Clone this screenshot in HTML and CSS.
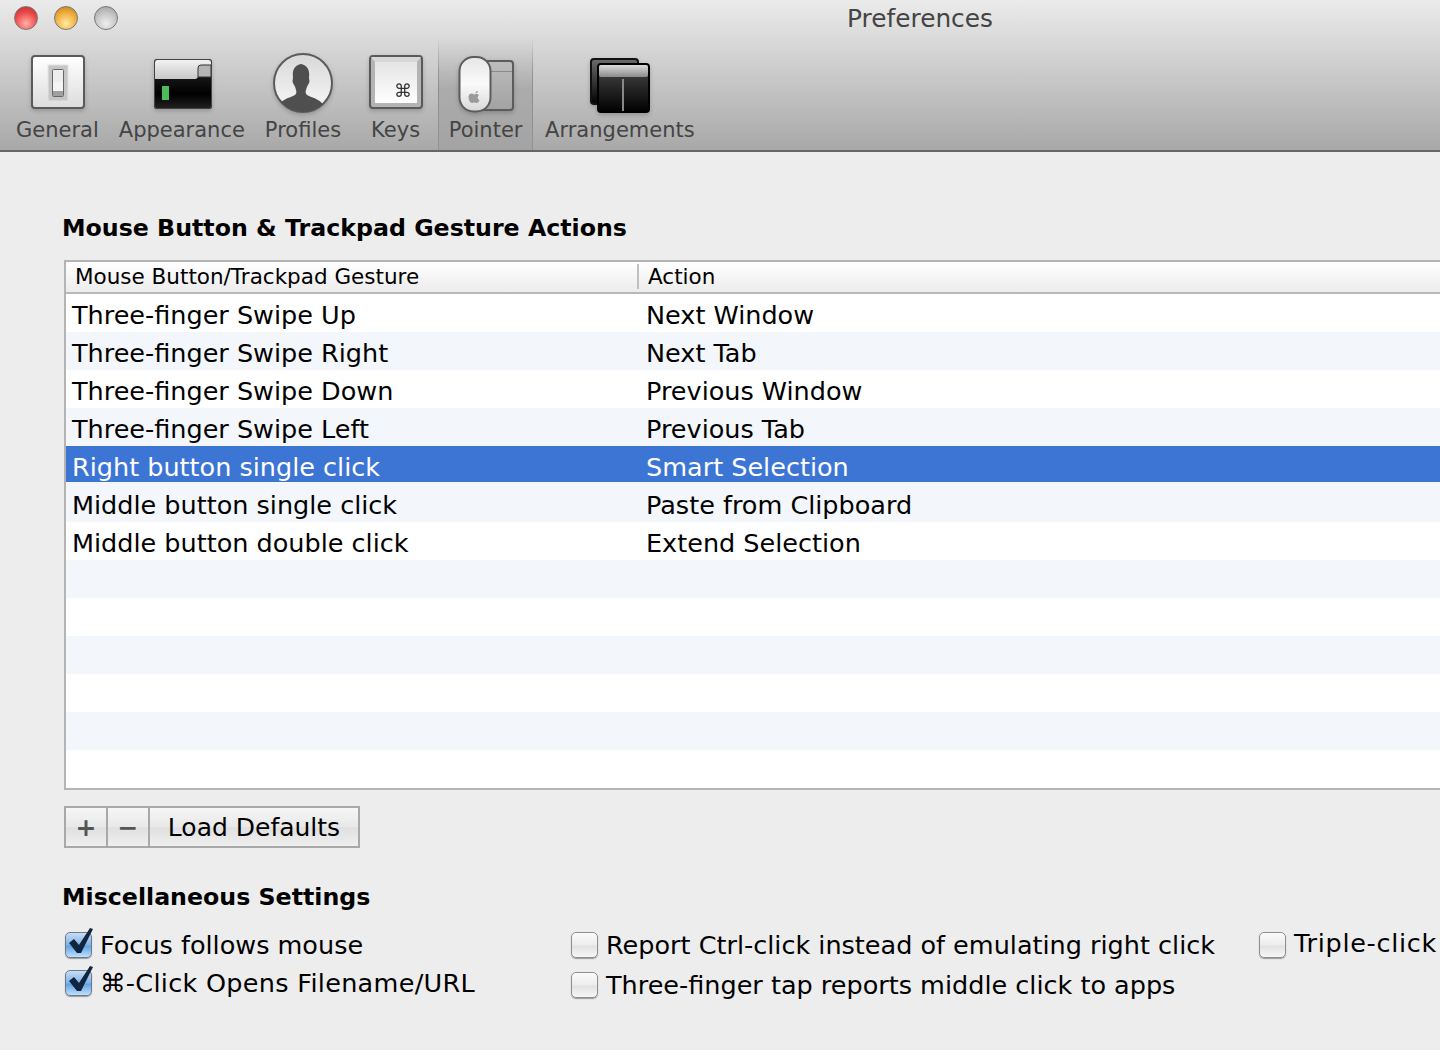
FILE: index.html
```html
<!DOCTYPE html>
<html lang="en">
<head>
  <meta charset="UTF-8">
  <title>Preferences</title>
  <link rel="stylesheet" href="styles.css">
</head>
<body>
  <header class="toolbar">
    <div class="titlebar">
      <div class="lights">
        <span class="light red"></span>
        <span class="light orange"></span>
        <span class="light gray"></span>
      </div>
      <div class="title">Preferences</div>
    </div>
    <nav class="tools">
      <div class="tool tool-general">
        <svg class="icon" viewBox="25 50 64 64">
          <defs>
            <linearGradient id="plate" x1="0" y1="0" x2="0" y2="1"><stop offset="0" stop-color="#fff"/><stop offset="1" stop-color="#dcdcdc"/></linearGradient>
          </defs>
          <rect x="32" y="56" width="52" height="52" rx="3" fill="url(#plate)" stroke="#5a5a5a" stroke-width="2"/>
          <rect x="48" y="65" width="20" height="36" fill="#c6c6c6" stroke="#e4e4e4"/>
          <rect x="52.5" y="69.5" width="11" height="27" rx="1" fill="#eee" stroke="#666"/>
          <rect x="53" y="85" width="10" height="11" fill="#a0a0a0"/>
          <rect x="53" y="82" width="10" height="9" fill="#f4f4f4"/>
        </svg>
        <span class="label">General</span>
      </div>
      <div class="tool tool-appearance">
        <svg class="icon" viewBox="149 50 64 64">
          <defs>
            <linearGradient id="appTop" x1="0" y1="0" x2="0" y2="1"><stop offset="0" stop-color="#f2f2f2"/><stop offset="1" stop-color="#c8c8c8"/></linearGradient>
            <linearGradient id="appBody" x1="0" y1="0" x2="0" y2="1"><stop offset="0" stop-color="#2c2c2c"/><stop offset=".7" stop-color="#000"/><stop offset="1" stop-color="#222"/></linearGradient>
          </defs>
          <rect x="153" y="59" width="58" height="50" rx="3" fill="url(#appBody)"/>
          <path d="M154 60h56v17h-13l-2 2h-41z" fill="url(#appTop)"/>
          <path d="M197 77v-9q0-3 3-3h10v12z" fill="#b4b4b4" stroke="#333"/>
          <rect x="153.500" y="59.500" width="57" height="49" rx="3" fill="none" stroke="#444"/>
          <rect x="161" y="86" width="7" height="14" fill="#4cbb5a"/>
        </svg>
        <span class="label">Appearance</span>
      </div>
      <div class="tool tool-profiles">
        <svg class="icon" viewBox="272 50 64 64">
          <defs>
            <linearGradient id="face" x1="0" y1="0" x2="0" y2="1"><stop offset="0" stop-color="#d8d8d8"/><stop offset="1" stop-color="#f8f8f8"/></linearGradient>
            <clipPath id="round"><circle cx="304" cy="83" r="29"/></clipPath>
          </defs>
          <circle cx="304" cy="83" r="29" fill="url(#face)" stroke="#5a5a5a" stroke-width="2"/>
          <path clip-path="url(#round)" d="M304 64c-8 0-11 6-10 13 0 3-1 4 0 6 1 2 2 3 3 7 1 3 0 5-3 6-4 2-12 3-16 12l24 8 24-8c-4-9-12-10-16-12-3-1-4-3-3-6 1-4 2-5 3-7 1-2 0-3 0-6 1-7-2-13-10-13z" fill="#4f4f4f"/>
        </svg>
        <span class="label">Profiles</span>
      </div>
      <div class="tool tool-keys">
        <svg class="icon" viewBox="364 50 64 64">
          <defs>
            <linearGradient id="keyFace" x1="0" y1="0" x2="0" y2="1"><stop offset="0" stop-color="#e4e4e4"/><stop offset="1" stop-color="#fff"/></linearGradient>
          </defs>
          <rect x="370" y="56" width="52" height="52" rx="3" fill="#b4b4b4" stroke="#5a5a5a" stroke-width="2"/>
          <path d="M371 57h50l-4 5v41h-42v-41z" fill="#d8d8d8"/>
          <rect x="375" y="62" width="42" height="41" fill="url(#keyFace)"/>
          <text class="key-glyph" x="403" y="97" text-anchor="middle">⌘</text>
        </svg>
        <span class="label">Keys</span>
      </div>
      <div class="tool tool-pointer">
        <svg class="icon" viewBox="454 50 64 64">
          <defs>
            <linearGradient id="win" x1="0" y1="0" x2="0" y2="1"><stop offset="0" stop-color="#bdbdbd"/><stop offset="1" stop-color="#a2a2a2"/></linearGradient>
            <linearGradient id="mouse" x1="0" y1="0" x2="0" y2="1"><stop offset="0" stop-color="#e6e6e6"/><stop offset=".5" stop-color="#fafafa"/><stop offset="1" stop-color="#d8d8d8"/></linearGradient>
          </defs>
          <rect x="480" y="61" width="33" height="49" rx="3" fill="url(#win)" stroke="#5c5c5c" stroke-width="2"/>
          <rect x="488" y="71" width="24" height="1" fill="#8a8a8a"/>
          <rect x="459.500" y="57" width="31" height="54.500" rx="14" fill="url(#mouse)" stroke="#5c5c5c" stroke-width="2"/>
          <path d="M475 93.500c1-2 2-2.500 3-2.500-.2 1.500-1.300 2.500-3 2.500zm-1 1c1 0 1.500-.5 2.500-.5s2 .5 2.500 1.200c-2 1.300-1.500 4 .5 4.800-.7 1.700-1.700 3-2.700 3-1 0-1.300-.6-2.500-.6s-1.600.6-2.500.6c-1.500 0-3.300-3.300-3.300-6 0-2.500 1.600-3.500 3-3.500.9 0 1.700.5 2.500 1z" fill="#9a9a9a"/>
        </svg>
        <span class="label">Pointer</span>
      </div>
      <div class="tool tool-arrange">
        <svg class="icon" viewBox="588 50 64 64">
          <defs>
            <linearGradient id="arrBack" x1="0" y1="0" x2="0" y2="1"><stop offset="0" stop-color="#6c6c6c"/><stop offset="1" stop-color="#000"/></linearGradient>
            <linearGradient id="arrBar" x1="0" y1="0" x2="0" y2="1"><stop offset="0" stop-color="#dcdcdc"/><stop offset="1" stop-color="#8a8a8a"/></linearGradient>
            <linearGradient id="arrBody" x1="0" y1="0" x2="0" y2="1"><stop offset="0" stop-color="#4a4a4a"/><stop offset="1" stop-color="#000"/></linearGradient>
          </defs>
          <rect x="591" y="59" width="47" height="45" rx="3" fill="url(#arrBack)" stroke="#111" stroke-width="2"/>
          <rect x="598" y="64" width="51" height="48" rx="3" fill="url(#arrBody)" stroke="#000" stroke-width="2"/>
          <rect x="599" y="65" width="49" height="12" rx="2" fill="url(#arrBar)"/>
          <rect x="622" y="79" width="2" height="32" fill="#888"/>
        </svg>
        <span class="label">Arrangements</span>
      </div>
    </nav>
  </header>

  <main class="content">
    <h2 class="heading">Mouse Button &amp; Trackpad Gesture Actions</h2>
    <div class="table">
      <div class="thead">
        <div class="th first">Mouse Button/Trackpad Gesture</div>
        <div class="th">Action</div>
      </div>
      <div class="row"><span>Three-finger Swipe Up</span><span>Next Window</span></div>
      <div class="row"><span>Three-finger Swipe Right</span><span>Next Tab</span></div>
      <div class="row"><span>Three-finger Swipe Down</span><span>Previous Window</span></div>
      <div class="row"><span>Three-finger Swipe Left</span><span>Previous Tab</span></div>
      <div class="row selected"><span>Right button single click</span><span>Smart Selection</span></div>
      <div class="row"><span>Middle button single click</span><span>Paste from Clipboard</span></div>
      <div class="row"><span>Middle button double click</span><span>Extend Selection</span></div>
      <div class="row"></div>
      <div class="row"></div>
      <div class="row"></div>
      <div class="row"></div>
      <div class="row"></div>
      <div class="row"></div>
    </div>

    <div class="buttons">
      <button class="btn btn-icon">+</button>
      <button class="btn btn-icon">−</button>
      <button class="btn btn-load">Load Defaults</button>
    </div>

    <h2 class="heading heading-misc">Miscellaneous Settings</h2>
    <div class="settings">
      <div class="col col-a">
        <label class="opt">
          <span class="box on"><svg class="tick" viewBox="0 0 30 32"><path d="M4 17l5-4 5 6L25 2l3 1-12 24h-4z" fill="#12253f"/></svg></span>
          Focus follows mouse
        </label>
        <label class="opt opt-wide">
          <span class="box on"><svg class="tick" viewBox="0 0 30 32"><path d="M4 17l5-4 5 6L25 2l3 1-12 24h-4z" fill="#12253f"/></svg></span>
          ⌘-Click Opens Filename/URL
        </label>
      </div>
      <div class="col col-b">
        <label class="opt"><span class="box"></span>Report Ctrl-click instead of emulating right click</label>
        <label class="opt"><span class="box"></span>Three-finger tap reports middle click to apps</label>
      </div>
      <div class="col col-c">
        <label class="opt"><span class="box"></span><span class="raised">Triple-click</span></label>
      </div>
    </div>
  </main>
</body>
</html>
```

FILE: styles.css
```css
* {
  box-sizing: border-box;
}
html, body {
  margin: 0;
  height: 1050px;
  overflow: hidden;
}
body {
  width: 1440px;
  background: #ededed;
  color: #000;
  font-family: "DejaVu Sans", sans-serif;
}

/* toolbar */
.toolbar {
  width: 1840px;
  height: 152px;
  background: linear-gradient(#ebebeb, #a8a8a8);
  border-bottom: 2px solid #666;
}
.titlebar {
  position: relative;
  height: 38px;
  display: flex;
  justify-content: center;
  align-items: center;
}
.lights {
  position: absolute;
  left: 14px;
  top: 6px;
  display: flex;
  gap: 16px;
}
.light {
  width: 24px;
  height: 24px;
  border-radius: 50%;
  border: 1px solid #777;
}
.red {
  background: radial-gradient(circle at 50% 75%, #ffb0a8, #ee4a4a 55%, #b82a2a);
}
.orange {
  background: radial-gradient(circle at 50% 75%, #ffe9a0, #f0ad3c 55%, #b87c20);
}
.gray {
  background: radial-gradient(circle at 50% 75%, #eee, #c4c4c4 55%, #999);
}
.title {
  font-size: 24.8px;
  color: #444;
  padding-bottom: 1px;
}
.tools {
  display: flex;
  height: 112px;
  padding-left: 6px;
}
.tool {
  display: flex;
  flex-direction: column;
  align-items: center;
  padding: 12px 10px 0;
  flex: none;
}
.icon {
  width: 64px;
  height: 64px;
  flex: none;
  filter: drop-shadow(0 2px 2px rgba(0, 0, 0, 0.2));
}
.label {
  font-size: 21px;
  line-height: 28px;
  margin-top: 2px;
  color: #444;
  white-space: nowrap;
}
.tool-keys {
  width: 85px;
  margin-left: 2px;
}
.tool-pointer {
  width: 95px;
  background: linear-gradient(rgba(0, 0, 0, 0), rgba(0, 0, 0, 0.12) 45%, rgba(0, 0, 0, 0.03));
  border-left: 1px solid;
  border-right: 1px solid;
  border-image: linear-gradient(rgba(0, 0, 0, 0), rgba(0, 0, 0, 0.2) 30%, rgba(0, 0, 0, 0.1)) 1;
}
.tool-arrange {
  margin-left: 2px;
}
.key-glyph {
  font-family: "DejaVu Sans", sans-serif;
  font-size: 18px;
  fill: #333;
}

/* main */
.content {
  width: 1840px;
  padding: 60px 0 0 64px;
}
.heading {
  margin: 0 0 0 -2px;
  font-size: 23.7px;
  line-height: 32px;
  font-weight: bold;
}
.table {
  margin-top: 16px;
  border: 2px solid #b4b4b4;
  background: #fff;
}
.thead {
  display: flex;
  height: 32px;
  padding-bottom: 2px;
  background: linear-gradient(#fff, #ececec);
  border-bottom: 2px solid #b8b8b8;
  align-items: center;
  font-size: 21.5px;
}
.th {
  padding-left: 9px;
}
.first {
  width: 573px;
  border-right: 2px solid #c0c0c0;
}
.row {
  display: flex;
  height: 38px;
  padding-top: 4px;
  align-items: center;
  font-size: 25.5px;
}
.row:nth-child(odd) {
  background: #f3f6fa;
}
.row span:first-child {
  width: 580px;
  padding-left: 6px;
}
.row.selected {
  padding-top: 5px;
  background: #3d75d4;
  color: #fff;
  border-bottom: 2px solid #f3f6fa;
}

/* buttons under table */
.buttons {
  display: inline-flex;
  gap: 2px;
  margin-top: 16px;
  border: 2px solid #a8a8a8;
  background: #a8a8a8;
  height: 42px;
}
.btn {
  border: 0;
  padding: 0;
  height: 38px;
  background: linear-gradient(#f6f6f6, #e8e8e8 50%, #e0e0e0 52%, #efefef);
  font-family: "DejaVu Sans", sans-serif;
  font-size: 25px;
  color: #000;
}
.btn-icon {
  width: 40px;
  font-weight: bold;
  color: #555;
}
.btn-load {
  width: 208px;
}
.heading-misc {
  margin-top: 33px;
}

/* checkboxes */
.settings {
  display: flex;
  margin-top: 19px;
  padding-left: 1px;
}
.col {
  display: flex;
  flex-direction: column;
  flex: none;
}
.col-a {
  width: 506px;
  gap: 12px;
}
.col-b {
  width: 688px;
  gap: 14px;
}
.opt {
  display: flex;
  align-items: center;
  gap: 8px;
  height: 26px;
  font-size: 25.5px;
  white-space: nowrap;
}
.opt-wide {
  letter-spacing: 0.3px;
}
.raised {
  padding-bottom: 4px;
  letter-spacing: 0.7px;
}
.box {
  position: relative;
  width: 27px;
  height: 26px;
  flex: none;
  border: 1px solid #8f8f8f;
  border-radius: 5px;
  background: linear-gradient(#fbfbfb, #ececec 50%, #e2e2e2 55%, #f6f6f6);
  box-shadow: 0 1px 1px rgba(0, 0, 0, 0.35);
}
.box.on {
  background: linear-gradient(#c6ddf6, #7fb2e8 50%, #62a2e4 55%, #bfe0fb);
  border-color: #6c7a8c;
}
.tick {
  position: absolute;
  left: -1px;
  top: -7px;
  width: 30px;
  height: 32px;
}
```
